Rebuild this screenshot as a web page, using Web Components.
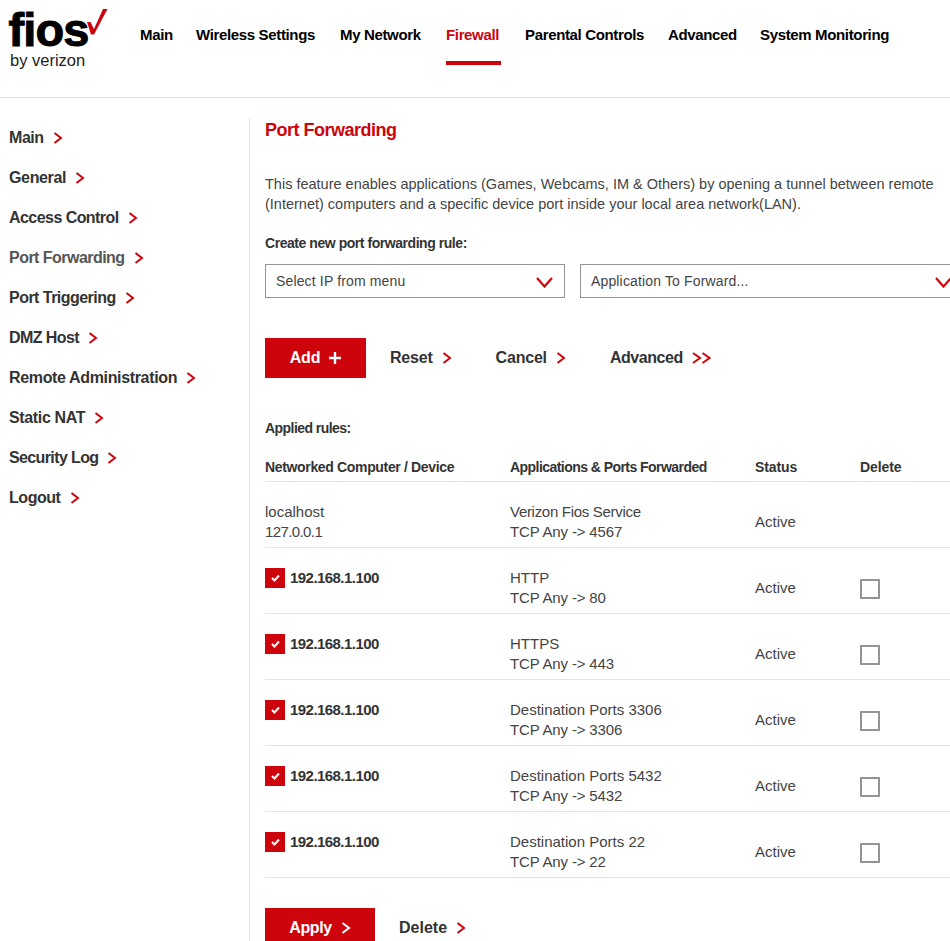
<!DOCTYPE html>
<html>
<head>
<meta charset="utf-8">
<style>
html, body { margin: 0; padding: 0; background: #fff; height: 941px; overflow: hidden; }
body { font-family: "Liberation Sans", Arial, sans-serif; color: #333; }
</style>
</head>
<body>
<fios-app></fios-app>
<script>
const CHEVRON = `<svg width="10" height="12" viewBox="0 0 10 12" fill="none" stroke="#cd040b" stroke-width="2"><path d="M1.5 1 L8 6 L1.5 11"/></svg>`;

class FiosLogo extends HTMLElement {
    connectedCallback() {
        this.attachShadow({ mode: 'open' }).innerHTML = `
            <style>
                :host { display: block; width: 100px; height: 72px; position: relative; color: #000; }
                .word { font: bold 47px/47px "Liberation Sans", sans-serif; letter-spacing: -0.9px; -webkit-text-stroke: 1px #000; margin: 6px 0 0 0.5px; display: block; }
                .by { font: 16.5px/16px "Liberation Sans", sans-serif; color: #222; display: block; margin: -1px 0 0 2px; }
                svg { position: absolute; left: 0; top: 0; }
            </style>
            <span class="word">fios</span>
            <span class="by">by verizon</span>
            <svg width="108" height="36" viewBox="8 0 108 36"><polygon fill="#cd040b" points="87,22 90.5,22 94,29 103,9 107.5,9 94,34.5 91,34.5"/></svg>
        `;
    }
}
customElements.define('fios-logo', FiosLogo);

class TopNav extends HTMLElement {
    connectedCallback() {
        const items = [['Main', 32], ['Wireless Settings', 120], ['My Network', 82], ['Firewall', 55], ['Parental Controls', 119], ['Advanced', 68], ['System Monitoring', 128]];
        const active = this.getAttribute('active');
        this.attachShadow({ mode: 'open' }).innerHTML = `
            <style>
                :host { display: flex; gap: 24px; margin-left: 32px; padding-top: 26px; align-items: flex-start; }
                a { font: bold 15px/18px "Liberation Sans", sans-serif; letter-spacing: -0.35px; color: #000; display: block; height: 35px; white-space: nowrap; }
                a.on { color: #cd040b; border-bottom: 4px solid #cd040b; }
            </style>
            ${items.map(([t, w]) => `<a class="${t === active ? 'on' : ''}" style="width:${w}px">${t}</a>`).join('')}
        `;
    }
}
customElements.define('top-nav', TopNav);

class SideNav extends HTMLElement {
    connectedCallback() {
        const items = [['Main', 0], ['General', 0.1], ['Access Control', -0.1], ['Port Forwarding', -0.08], ['Port Triggering', -0.08], ['DMZ Host', -0.12], ['Remote Administration', 0.1], ['Static NAT', 0.1], ['Security Log', -0.17], ['Logout', 0]];
        const active = this.getAttribute('active');
        this.attachShadow({ mode: 'open' }).innerHTML = `
            <style>
                :host { display: flex; flex-direction: column; width: 250px; box-sizing: border-box; padding: 10px 0 0 9px; border-right: 1px solid #e3e3e3; }
                a { font: bold 16px/20px "Liberation Sans", sans-serif; color: #333; height: 40px; display: flex; align-items: flex-start; gap: 9px; }
                a.on { color: #555; }
                svg { margin-top: 4px; }
            </style>
            ${items.map(([t, d]) => `<a class="${t === active ? 'on' : ''}" style="letter-spacing:${(-0.45 + d).toFixed(2)}px">${t}${CHEVRON}</a>`).join('')}
        `;
    }
}
customElements.define('side-nav', SideNav);

class FiosSelect extends HTMLElement {
    connectedCallback() {
        this.attachShadow({ mode: 'open' }).innerHTML = `
            <style>
                :host { display: flex; flex: none; width: 300px; height: 34px; box-sizing: border-box; border: 1px solid #949494; align-items: center; justify-content: space-between; padding: 0 11px 0 10px; font: 14px "Liberation Sans", sans-serif; letter-spacing: 0.15px; color: #444; }
                svg { margin-top: 3px; flex: none; }
            </style>
            <span><slot></slot></span>
            <svg width="17" height="11" viewBox="0 0 17 11" fill="none" stroke="#cd040b" stroke-width="2.2"><path d="M1 1 L8.5 9.5 L16 1"/></svg>
        `;
    }
}
customElements.define('fios-select', FiosSelect);

class FiosBtn extends HTMLElement {
    connectedCallback() {
        const primary = this.hasAttribute('primary');
        const icon = this.getAttribute('icon') || 'chevron';
        const color = primary ? '#fff' : '#cd040b';
        const icons = {
            chevron: `<svg width="10" height="12" viewBox="0 0 10 12" fill="none" stroke="${color}" stroke-width="2"><path d="M1.5 1 L8 6 L1.5 11"/></svg>`,
            double: `<svg width="19" height="12" viewBox="0 0 19 12" fill="none" stroke="${color}" stroke-width="2"><path d="M1 1 L8 6 L1 11 M10.5 1 L17.5 6 L10.5 11"/></svg>`,
            plus: `<svg width="12" height="12" viewBox="0 0 12 12" fill="none" stroke="${color}" stroke-width="2.4"><path d="M0 6 H12 M6 0 V12"/></svg>`
        };
        this.attachShadow({ mode: 'open' }).innerHTML = `
            <style>
                :host { display: flex; align-items: center; gap: 9px; font: bold 16px "Liberation Sans", sans-serif; letter-spacing: -0.2px; color: #333; height: 40px; }
                :host([primary]) { background: #cd040b; color: #fff; justify-content: center; }
            </style>
            <span><slot></slot></span>${icons[icon]}
        `;
    }
}
customElements.define('fios-btn', FiosBtn);

const COLS = '245px 245px 105px 1fr';

class RuleRow extends HTMLElement {
    connectedCallback() {
        const host = this.getAttribute('host');
        const ip = this.getAttribute('ip');
        const app = this.getAttribute('app');
        const ports = this.getAttribute('ports');
        const appSpacing = this.getAttribute('app-spacing') || '0';
        const first = host
            ? `<div>${host}<br><span class="tight">${ip}</span></div>`
            : `<div class="ip"><span class="check"><svg width="9" height="8" viewBox="0 0 9 8" fill="none" stroke="#fff" stroke-width="2"><path d="M1 4 L3.5 6.5 L8 1.5"/></svg></span>${ip}</div>`;
        this.attachShadow({ mode: 'open' }).innerHTML = `
            <style>
                :host { display: grid; grid-template-columns: ${COLS}; height: 66px; box-sizing: border-box; padding-top: 14px; border-bottom: 1px solid #e3e3e3; font: 15px/20px "Liberation Sans", sans-serif; color: #444; align-items: center; }
                .tight { letter-spacing: -0.6px; }
                .ports { letter-spacing: -0.15px; }
                .ip { display: flex; gap: 5px; align-self: start; padding-top: 6px; font: bold 15px/20px "Liberation Sans", sans-serif; letter-spacing: -0.55px; color: #333; }
                .check { width: 20px; height: 20px; background: #cd040b; display: flex; align-items: center; justify-content: center; }
                .box { width: 20px; height: 20px; box-sizing: border-box; border: 2px solid #949494; margin-top: 2px; }
            </style>
            ${first}
            <div><span style="letter-spacing:${appSpacing}px">${app}</span><br><span class="ports">${ports}</span></div>
            <div>Active</div>
            <div>${host ? '' : '<div class="box"></div>'}</div>
        `;
    }
}
customElements.define('rule-row', RuleRow);

class RuleTable extends HTMLElement {
    connectedCallback() {
        this.attachShadow({ mode: 'open' }).innerHTML = `
            <style>
                :host { display: block; }
                .head { display: grid; grid-template-columns: ${COLS}; height: 25px; border-bottom: 1px solid #e3e3e3; font: bold 14px/20px "Liberation Sans", sans-serif; color: #333; box-sizing: border-box; }
            </style>
            <div class="head">
                <div style="letter-spacing:-0.34px">Networked Computer / Device</div>
                <div style="letter-spacing:-0.55px">Applications &amp; Ports Forwarded</div>
                <div style="letter-spacing:-0.1px">Status</div>
                <div style="letter-spacing:-0.1px">Delete</div>
            </div>
            <slot></slot>
        `;
    }
}
customElements.define('rule-table', RuleTable);

class PortForwarding extends HTMLElement {
    connectedCallback() {
        this.attachShadow({ mode: 'open' }).innerHTML = `
            <style>
                :host { display: block; flex: none; width: 685px; padding: 0 0 0 15px; }
                h1 { font: bold 18px/24px "Liberation Sans", sans-serif; letter-spacing: -0.5px; color: #cd040b; margin: 0; }
                p { font: 14.5px/20px "Liberation Sans", sans-serif; color: #444; margin: 32px 0 0; width: 690px; }
                h2 { font: bold 14px/20px "Liberation Sans", sans-serif; letter-spacing: -0.45px; color: #333; margin: 0; }
                .create { margin-top: 19px; }
                .selects { display: flex; gap: 15px; margin-top: 11px; }
                .selects fios-select + fios-select { width: 384px; }
                .actions { display: flex; margin-top: 40px; }
                .actions fios-btn:nth-child(1) { width: 101px; }
                .actions fios-btn:nth-child(2) { margin-left: 24px; }
                .actions fios-btn:nth-child(3) { margin-left: 44px; }
                .actions fios-btn:nth-child(4) { margin-left: 44px; }
                .applied { margin-top: 40px; letter-spacing: -0.55px; }
                rule-table { margin-top: 19px; }
                .footer { display: flex; margin-top: 30px; }
                .footer fios-btn:nth-child(1) { width: 110px; }
                .footer fios-btn:nth-child(2) { margin-left: 24px; }
            </style>
            <h1>Port Forwarding</h1>
            <p>This feature enables applications (Games, Webcams, IM &amp; Others) by opening a tunnel between remote (Internet) computers and a specific device port inside your local area network(LAN).</p>
            <h2 class="create">Create new port forwarding rule:</h2>
            <div class="selects">
                <fios-select>Select IP from menu</fios-select>
                <fios-select>Application To Forward...</fios-select>
            </div>
            <div class="actions">
                <fios-btn primary icon="plus">Add</fios-btn>
                <fios-btn>Reset</fios-btn>
                <fios-btn>Cancel</fios-btn>
                <fios-btn icon="double" style="letter-spacing:-0.45px">Advanced</fios-btn>
            </div>
            <h2 class="applied">Applied rules:</h2>
            <rule-table>
                <rule-row host="localhost" ip="127.0.0.1" app="Verizon Fios Service" app-spacing="-0.3" ports="TCP Any -&gt; 4567"></rule-row>
                <rule-row ip="192.168.1.100" app="HTTP" ports="TCP Any -&gt; 80"></rule-row>
                <rule-row ip="192.168.1.100" app="HTTPS" ports="TCP Any -&gt; 443"></rule-row>
                <rule-row ip="192.168.1.100" app="Destination Ports 3306" ports="TCP Any -&gt; 3306"></rule-row>
                <rule-row ip="192.168.1.100" app="Destination Ports 5432" ports="TCP Any -&gt; 5432"></rule-row>
                <rule-row ip="192.168.1.100" app="Destination Ports 22" ports="TCP Any -&gt; 22"></rule-row>
            </rule-table>
            <div class="footer">
                <fios-btn primary style="letter-spacing:-0.4px">Apply</fios-btn>
                <fios-btn style="letter-spacing:0">Delete</fios-btn>
            </div>
        `;
    }
}
customElements.define('port-forwarding', PortForwarding);

class FiosApp extends HTMLElement {
    connectedCallback() {
        this.attachShadow({ mode: 'open' }).innerHTML = `
            <style>
                :host { display: block; width: 950px; height: 941px; overflow: hidden; }
                header { display: flex; height: 98px; box-sizing: border-box; border-bottom: 1px solid #e3e3e3; padding-left: 8px; }
                .body { display: flex; margin-top: 20px; height: 823px; }
            </style>
            <header>
                <fios-logo></fios-logo>
                <top-nav active="Firewall"></top-nav>
            </header>
            <div class="body">
                <side-nav active="Port Forwarding"></side-nav>
                <port-forwarding></port-forwarding>
            </div>
        `;
    }
}
customElements.define('fios-app', FiosApp);
</script>
</body>
</html>
